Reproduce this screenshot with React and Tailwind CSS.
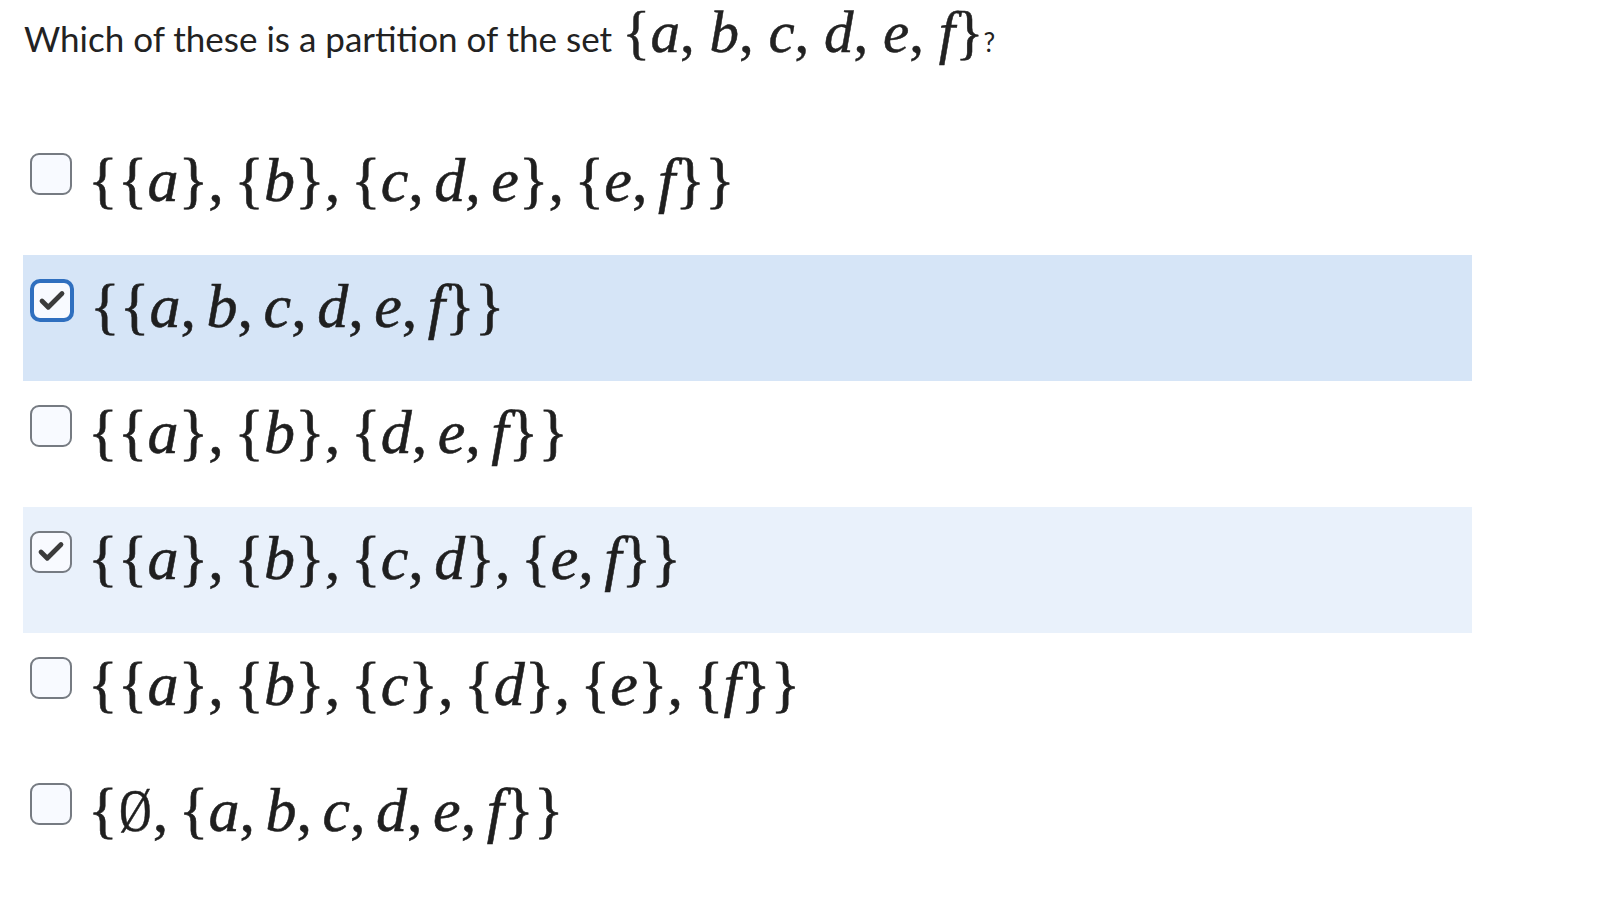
import React from 'react';
import { Check } from 'lucide-react';

const MathText = ({ expr, className = '' }) => {
  const parts = [];
  for (let i = 0; i < expr.length; i++) {
    const ch = expr[i];
    if (/[a-z]/.test(ch)) {
      parts.push(
        <span key={i} className="italic">
          {ch}
        </span>
      );
    } else if (ch === ',') {
      parts.push(
        <span key={i} className="mr-[0.17em]">
          ,
        </span>
      );
    } else if (ch === 'Ø') {
      // narrow slashed zero like \emptyset
      parts.push(
        <span key={i} className="inline-block scale-x-[0.72] -mx-[0.08em]">
          Ø
        </span>
      );
    } else {
      parts.push(<span key={i}>{ch}</span>);
    }
  }
  return (
    <span
      className={`font-['Liberation_Serif',serif] text-[#1f1f1f] [-webkit-text-stroke:0.6px_#1f1f1f] whitespace-nowrap ${className}`}
    >
      {parts}
    </span>
  );
};

const Box = ({ checked, focused }) => {
  if (focused) {
    return (
      <div className="w-[44px] h-[43px] shrink-0 rounded-[10px] border-[4px] border-[#2f6fbf] bg-[#f8faff] flex items-center justify-center">
        <Check className="w-[30px] h-[30px] text-[#3b3b3b]" strokeWidth={3.8} />
      </div>
    );
  }
  return (
    <div className="w-[42px] h-[42px] shrink-0 rounded-[9px] border-2 border-[#767b82] bg-[#f8faff] flex items-center justify-center">
      {checked && <Check className="w-[30px] h-[30px] text-[#3b3b3b]" strokeWidth={3.8} />}
    </div>
  );
};

const answers = [
  { expr: '{{a},{b},{c,d,e},{e,f}}', bg: '' },
  { expr: '{{a,b,c,d,e,f}}', bg: 'bg-[#d6e5f7]', checked: true, focused: true },
  { expr: '{{a},{b},{d,e,f}}', bg: '' },
  { expr: '{{a},{b},{c,d},{e,f}}', bg: 'bg-[#e9f1fb]', checked: true },
  { expr: '{{a},{b},{c},{d},{e},{f}}', bg: '' },
  { expr: '{Ø,{a,b,c,d,e,f}}', bg: '' },
];

export default function App() {
  return (
    <div className="min-h-screen w-full bg-white font-['Lato',sans-serif] text-[#222]">
      {/* Question */}
      <div className="h-[129px] pl-[24px]">
        <p className="flex items-baseline text-[35px] leading-none">
          <span>Which of these is a partition of the set</span>
          <span className="ml-[10px] font-['Liberation_Serif',serif] text-[59px] leading-[1.1] [-webkit-text-stroke:0.5px_#222] whitespace-nowrap">
            {'{'}
            <span className="italic">a</span>, <span className="italic">b</span>,{' '}
            <span className="italic">c</span>, <span className="italic">d</span>,{' '}
            <span className="italic">e</span>, <span className="italic">f</span>
            {'}'}
          </span>
          <span className="text-[26px]">?</span>
        </p>
      </div>

      {/* Answers */}
      <div className="flex flex-col">
        {answers.map((a, i) => (
          <div
            key={i}
            className={`ml-[23px] w-[1449px] h-[126px] flex items-start gap-[16px] pl-[7px] pt-[24px] ${a.bg}`}
          >
            <Box checked={a.checked} focused={a.focused} />
            <MathText expr={a.expr} className="text-[62px] leading-none -mt-[4px]" />
          </div>
        ))}
      </div>
    </div>
  );
}
